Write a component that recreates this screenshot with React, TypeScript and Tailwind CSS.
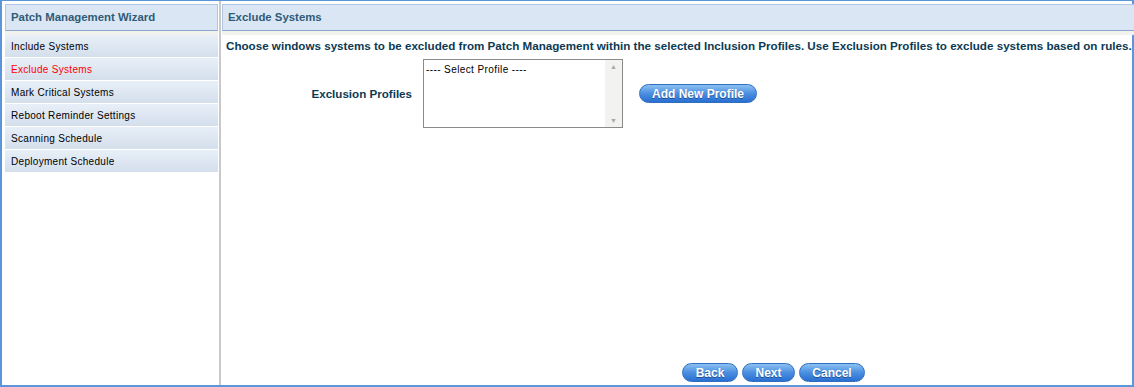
import React from "react";

const steps = [
    "Include Systems",
    "Exclude Systems",
    "Mark Critical Systems",
    "Reboot Reminder Settings",
    "Scanning Schedule",
    "Deployment Schedule",
];

function PillButton(props: {label: string, className?: string}) {
    return <button className={"h-[19px] rounded-full border border-[#2f6fc0] bg-gradient-to-b from-[#8cc0f2] via-[#4a8fe0] to-[#2a6fd0] text-white font-bold text-[12px] leading-none [text-shadow:0_1px_0_#1d4f94] " + (props.className ?? "")}>
        {props.label}
    </button>;
}

function PanelHeader(props: {title: string}) {
    return <div className="flex flex-col">
        <div className="h-[27px] flex items-center border border-[#b0c6e2] border-b-[#8aa7ce] bg-[#dbe6f4] px-[5px] text-[11.4px] font-bold text-[#2e5b78]">
            {props.title}
        </div>
        <div className="h-[4px] bg-[#f1f1ee]" />
    </div>;
}

export default function App() {
    const active = "Exclude Systems";
    return <div className="w-[1134px] h-[387px] bg-white border-x-2 border-b-2 border-t border-[#5b95dc] flex font-['Liberation_Sans',Arial,sans-serif]">
        <div className="w-[219px] shrink-0 border-r-2 border-[#c9c9c9] pl-[3px] pr-[1px] pt-[3px] flex flex-col">
            <PanelHeader title="Patch Management Wizard" />
            <div className="flex flex-col gap-px">
                {steps.map((s) => <div key={s} className={"h-[22px] flex items-center px-[6px] bg-gradient-to-b from-[#e8eff8] to-[#d4dfec] text-[10px] tracking-[0.3px] cursor-pointer " + (s === active ? "text-[#ff0000]" : "text-black")}>
                    {s}
                </div>)}
            </div>
        </div>
        <div className="flex-1 pl-[1px] pt-[3px] flex flex-col">
            <PanelHeader title="Exclude Systems" />
            <div className="px-[4px] pt-[2px] text-[11.63px] font-bold text-[#0c3a54] whitespace-nowrap">
                Choose windows systems to be excluded from Patch Management within the selected Inclusion Profiles. Use Exclusion Profiles to exclude systems based on rules.
            </div>
            <div className="flex items-center mt-[5px]">
                <div className="w-[190px] text-right text-[11.6px] font-bold text-[#0c3a54]">Exclusion Profiles</div>
                <div className="ml-[11px] w-[200px] h-[69px] border border-[#8a8a8a] flex">
                    <div className="flex-1 px-[2px] pt-[2px] text-[10px] tracking-[0.4px] text-black">---- Select Profile ----</div>
                    <div className="w-[17px] bg-[#f2f2f0] flex flex-col justify-between items-center py-[3px] text-[7px] text-[#a8a8a8] leading-none">
                        <span>▲</span>
                        <span>▼</span>
                    </div>
                </div>
                <PillButton label="Add New Profile" className="ml-[16px] w-[118px]" />
            </div>
            <div className="mt-auto mb-[3px] flex gap-[4px] pl-[460px]">
                <PillButton label="Back" className="w-[56px]" />
                <PillButton label="Next" className="w-[53px]" />
                <PillButton label="Cancel" className="w-[66px]" />
            </div>
        </div>
    </div>;
}
